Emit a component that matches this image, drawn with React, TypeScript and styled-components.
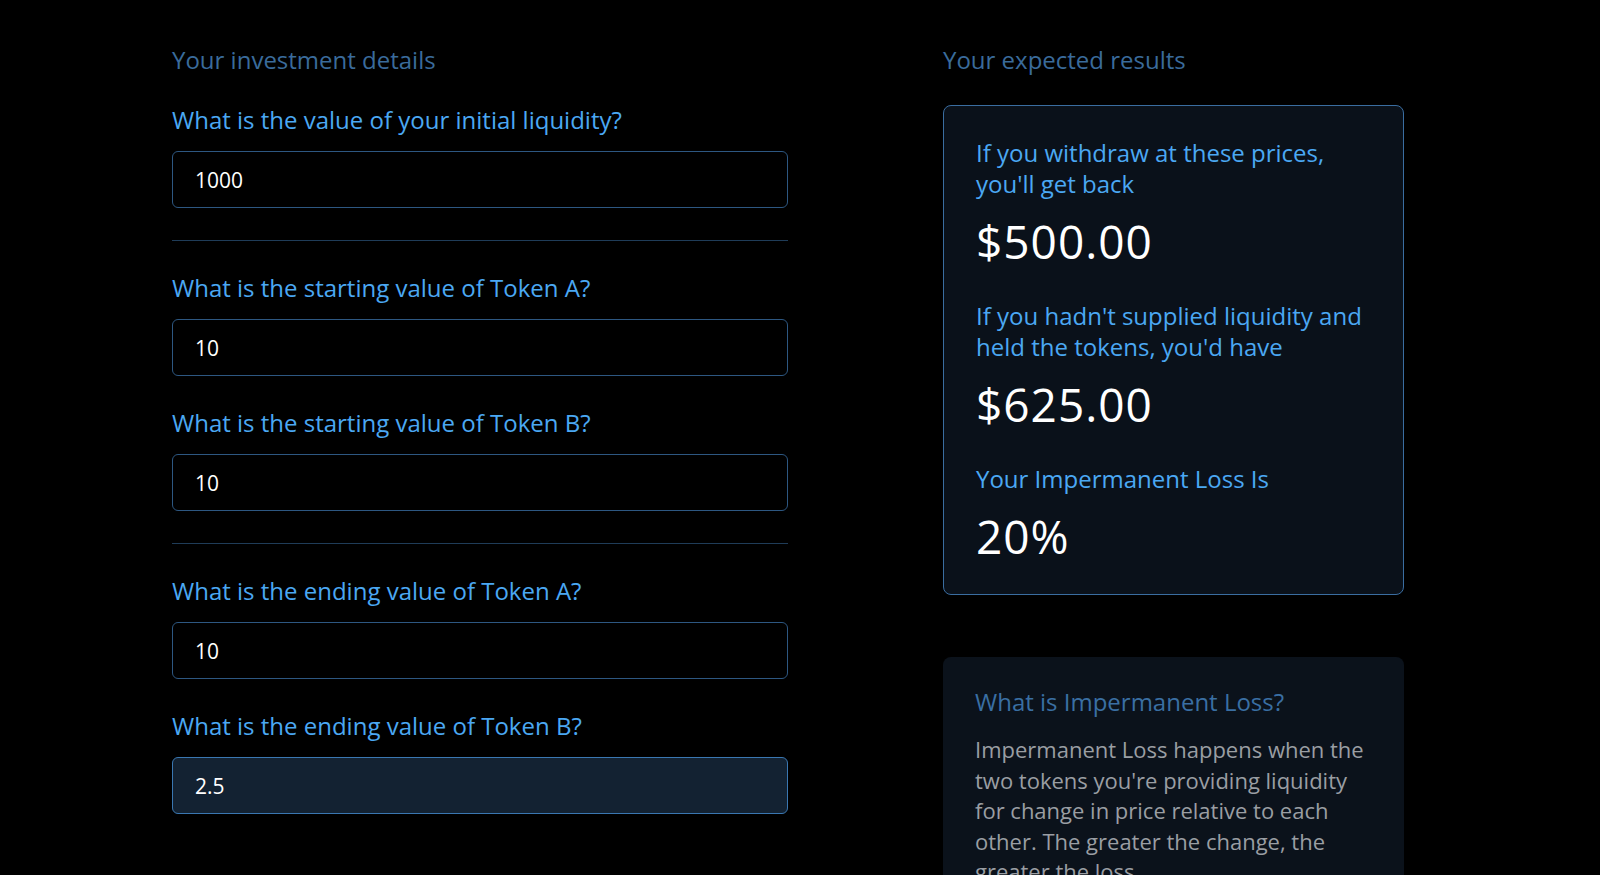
import styled, { createGlobalStyle } from 'styled-components';

const GlobalStyle = createGlobalStyle`
  html, body {
    margin: 0;
    padding: 0;
    background: #000;
  }
  body {
    font-family: 'Open Sans', 'Liberation Sans', sans-serif;
  }
`;

const Page = styled.div`
  display: grid;
  grid-template-columns: 616px 461px;
  column-gap: 155px;
  padding: 45px 0 0 172px;
  height: 875px;
  box-sizing: border-box;
  overflow: hidden;
  background: #000;
`;

const Column = styled.div`
  display: flex;
  flex-direction: column;
`;

const SectionTitle = styled.h2`
  margin: 0 0 30px;
  font-size: 24px;
  line-height: 30px;
  font-weight: 400;
  color: #3a6b9b;
`;

const Field = styled.div`
  display: flex;
  flex-direction: column;
  gap: 16px;
  margin-bottom: 32px;
`;

const Label = styled.label`
  font-size: 24px;
  line-height: 30px;
  color: #4ba8f3;
`;

const Input = styled.input<{ $active?: boolean }>`
  box-sizing: border-box;
  width: 100%;
  height: 57px;
  padding: 0 22px;
  border: 1.5px solid ${(p) => (p.$active ? '#3a77b1' : '#2d5781')};
  border-radius: 6px;
  background: ${(p) => (p.$active ? '#132232' : '#000')};
  color: #fff;
  font-family: inherit;
  font-size: 21px;
  outline: none;
  caret-color: #fff;
`;

const Divider = styled.hr`
  width: 100%;
  margin: 0 0 32px;
  border: 0;
  border-top: 1.5px solid #1f3c58;
`;

const ResultCard = styled.div`
  display: flex;
  flex-direction: column;
  padding: 31px 32px 32px;
  border: 1.5px solid #3a6da0;
  border-radius: 8px;
  background: #0a111a;
`;

const ResultLabel = styled.div`
  font-size: 24px;
  line-height: 31px;
  color: #4ba8f3;
  margin-bottom: 16px;
`;

const ResultValue = styled.div`
  font-size: 46px;
  line-height: 52px;
  font-weight: 500;
  letter-spacing: 1px;
  color: #fff;
  margin-bottom: 33px;

  &:last-child {
    margin-bottom: 0;
  }
`;

const InfoCard = styled.div`
  margin-top: 62px;
  padding: 30px 32px 32px;
  border-radius: 8px;
  background: #0b121b;
`;

const InfoTitle = styled.h3`
  margin: 0 0 17px;
  font-size: 24px;
  line-height: 30px;
  font-weight: 400;
  color: #3a6fa3;
`;

const InfoText = styled.p`
  margin: 0;
  font-size: 22px;
  line-height: 30.5px;
  color: #9a9ea3;
  white-space: nowrap;
`;

const fields = [
  { id: 'initial', label: 'What is the value of your initial liquidity?', value: '1000', divider: true },
  { id: 'startA', label: 'What is the starting value of Token A?', value: '10' },
  { id: 'startB', label: 'What is the starting value of Token B?', value: '10', divider: true },
  { id: 'endA', label: 'What is the ending value of Token A?', value: '10' },
  { id: 'endB', label: 'What is the ending value of Token B?', value: '2.5', active: true },
];

const infoLines = [
  'Impermanent Loss happens when the',
  "two tokens you're providing liquidity",
  'for change in price relative to each',
  'other. The greater the change, the',
  'greater the loss.',
];

export default function App() {
  return (
    <>
      <GlobalStyle />
      <Page>
        <Column>
          <SectionTitle>Your investment details</SectionTitle>
          {fields.map((f) => (
            <div key={f.id}>
              <Field>
                <Label htmlFor={f.id}>{f.label}</Label>
                <Input id={f.id} defaultValue={f.value} $active={f.active} autoFocus={f.active} />
              </Field>
              {f.divider && <Divider />}
            </div>
          ))}
        </Column>
        <Column>
          <SectionTitle>Your expected results</SectionTitle>
          <ResultCard>
            <ResultLabel>
              If you withdraw at these prices,
              <br />
              you'll get back
            </ResultLabel>
            <ResultValue>$500.00</ResultValue>
            <ResultLabel>
              If you hadn't supplied liquidity and
              <br />
              held the tokens, you'd have
            </ResultLabel>
            <ResultValue>$625.00</ResultValue>
            <ResultLabel>Your Impermanent Loss Is</ResultLabel>
            <ResultValue>20%</ResultValue>
          </ResultCard>
          <InfoCard>
            <InfoTitle>What is Impermanent Loss?</InfoTitle>
            <InfoText>
              {infoLines.map((line, i) => (
                <span key={i}>
                  {line}
                  {i < infoLines.length - 1 && <br />}
                </span>
              ))}
            </InfoText>
          </InfoCard>
        </Column>
      </Page>
    </>
  );
}
